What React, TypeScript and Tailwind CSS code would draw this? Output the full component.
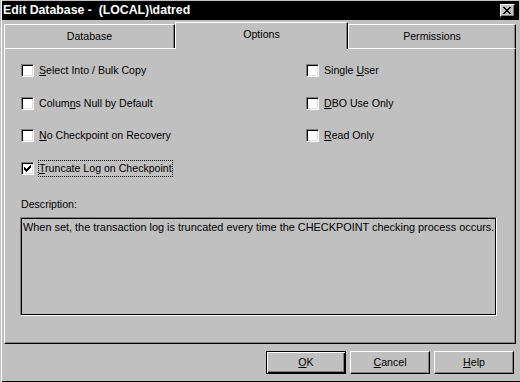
import React from "react";

// pixel glyphs, one string per row
const CHECK = ["......#", ".....##", "#...###", "##.###.", "#####..", ".###...", "..#...."];
const CROSS = ["##....##", ".##..##.", "..####..", "...##...", "..####..", ".##..##.", "##....##"];

function Pixels({ rows }: { rows: string[] }) {
  const w = rows[0].length;
  const h = rows.length;
  let d = "";
  rows.forEach((row, y) => {
    row.split("").forEach((c, x) => {
      if (c === "#") d += `M${x} ${y}h1v1h-1z`;
    });
  });
  return (
    <svg width={w} height={h} viewBox={`0 0 ${w} ${h}`} shapeRendering="crispEdges" className="block">
      <path d={d} fill="#000" />
    </svg>
  );
}

function Label({ text, key1 }: { text: string; key1: number }) {
  return (
    <>
      {text.slice(0, key1)}
      <u className="underline-offset-[1px]">{text[key1]}</u>
      {text.slice(key1 + 1)}
    </>
  );
}

interface OptionProps {
  text: string;
  hot: number;
  checked?: boolean;
  focused?: boolean;
}

function Option({ text, hot, checked, focused }: OptionProps) {
  return (
    <div className="flex items-center h-[13px] gap-[4px]">
      <div className="w-[13px] h-[13px] shrink-0 bg-white border border-t-[#808080] border-l-[#808080] border-b-white border-r-white shadow-[inset_1px_1px_0_#000,inset_-1px_-1px_0_#dfdfdf] flex items-center justify-center">
        {checked && <Pixels rows={CHECK} />}
      </div>
      <span
        className={`border py-px leading-[13px] whitespace-nowrap ${
          focused ? "border-dotted border-black" : "border-transparent"
        }`}
      >
        <Label text={text} key1={hot} />
      </span>
    </div>
  );
}

const leftOptions: OptionProps[] = [
  { text: "Select Into / Bulk Copy", hot: 0 },
  { text: "Columns Null by Default", hot: 5 },
  { text: "No Checkpoint on Recovery", hot: 0 },
  { text: "Truncate Log on Checkpoint", hot: 0, checked: true, focused: true },
];

const rightOptions: OptionProps[] = [
  { text: "Single User", hot: 7 },
  { text: "DBO Use Only", hot: 0 },
  { text: "Read Only", hot: 0 },
];

const rowGaps = ["mt-0", "mt-[20px]", "mt-[19px]", "mt-[20px]"];

function Button({ text, hot, isDefault }: { text: string; hot: number; isDefault?: boolean }) {
  return (
    <div
      className={`w-[80px] h-[23px] flex items-center justify-center ${
        isDefault
          ? "border border-black shadow-[inset_1px_1px_0_#fff,inset_-1px_-1px_0_#000,inset_-2px_-2px_0_#808080]"
          : "border border-t-white border-l-white border-r-black border-b-black shadow-[inset_-1px_-1px_0_#808080]"
      }`}
    >
      <Label text={text} key1={hot} />
    </div>
  );
}

export default function App() {
  return (
    <div className="w-[520px] h-[382px] bg-[#c0c0c0] overflow-hidden flex flex-col text-[10.6px] text-black font-['Liberation_Sans',Arial,sans-serif] shadow-[inset_1px_0_0_#c0c0c0,inset_2px_0_0_#fff,inset_0_-1px_0_#000]">
      {/* title bar */}
      <div className="ml-[2px] mt-px w-[517px] h-[19px] shrink-0 bg-black flex items-center justify-between pl-px pr-[4px]">
        <span className="text-white font-bold text-[12.3px] leading-none whitespace-pre">
          {"Edit Database -  (LOCAL)\\datred"}
        </span>
        <div className="w-[15px] h-[13px] bg-[#c0c0c0] border border-t-white border-l-white border-r-black border-b-black shadow-[inset_-1px_-1px_0_#808080] flex items-center justify-center pb-px pr-px">
          <Pixels rows={CROSS} />
        </div>
      </div>

      {/* tabs */}
      <div className="ml-[4px] mt-[2px] h-[26px] flex items-end shrink-0">
        <div className="w-[171px] h-[24px] flex items-center justify-center border-t border-l border-r border-t-white border-l-white border-r-black shadow-[inset_-1px_0_0_#808080]">
          Database
        </div>
        <div className="relative z-10 -mb-px w-[173px] h-[27px] pb-[3px] bg-[#c0c0c0] flex items-center justify-center border-t border-l border-r border-t-white border-l-white border-r-black shadow-[inset_-1px_0_0_#808080]">
          Options
        </div>
        <div className="w-[168px] h-[24px] flex items-center justify-center border-t border-l border-r border-t-white border-l-white border-r-black shadow-[inset_-1px_0_0_#808080]">
          Permissions
        </div>
      </div>

      {/* panel */}
      <div className="ml-[4px] w-[512px] h-[296px] shrink-0 border border-t-white border-l-white border-r-black border-b-black shadow-[inset_-1px_-1px_0_#808080] pt-[15px]">
        <div className="flex pl-[16px]">
          <div className="w-[285px] flex flex-col">
            {leftOptions.map((o, i) => (
              <div key={o.text} className={rowGaps[i]}>
                <Option {...o} />
              </div>
            ))}
          </div>
          <div className="flex flex-col">
            {rightOptions.map((o, i) => (
              <div key={o.text} className={rowGaps[i]}>
                <Option {...o} />
              </div>
            ))}
          </div>
        </div>

        <div className="mt-[23px] ml-[16px] leading-[13px]">Description:</div>
        <div className="mt-[6px] ml-[15px] w-[477px] h-[99px] border border-t-[#808080] border-l-[#808080] border-b-white border-r-white shadow-[inset_0_0_0_1px_#000] pl-[2px] pt-[3px] text-[10.9px] leading-[13px] whitespace-nowrap">
          When set, the transaction log is truncated every time the CHECKPOINT checking process occurs.
        </div>
      </div>

      {/* buttons */}
      <div className="mt-[7px] ml-[266px] flex gap-[4px]">
        <Button text="OK" hot={0} isDefault />
        <Button text="Cancel" hot={0} />
        <Button text="Help" hot={0} />
      </div>
    </div>
  );
}
